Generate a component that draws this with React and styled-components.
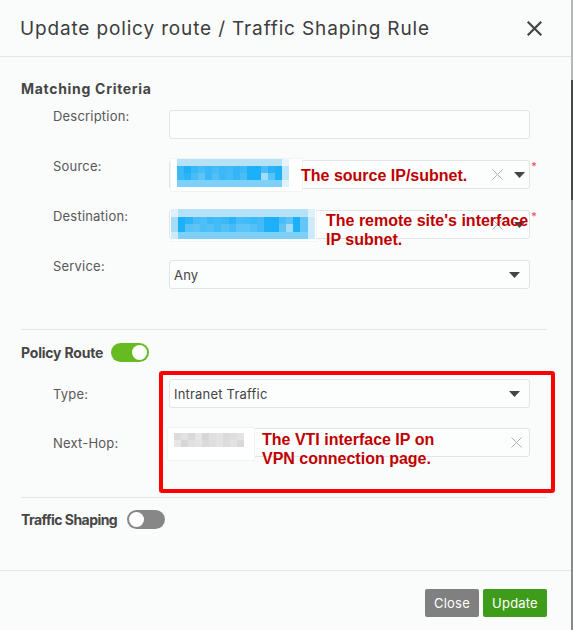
import React from "react";
import styled, { createGlobalStyle } from "styled-components";

const GlobalStyle = createGlobalStyle`
  html, body { margin: 0; padding: 0; }
  body {
    background: #fafbfb;
    font-family: Inter, "Noto Sans", "Liberation Sans", sans-serif;
    color: #444;
  }
`;

const Page = styled.div`
  display: flex;
  width: 573px;
  height: 630px;
  overflow: hidden;
`;

const Dialog = styled.div`
  width: 571px;
  display: flex;
  flex-direction: column;
  background: #fafbfb;
`;

const ScrollTrack = styled.div`
  width: 2px;
  display: flex;
  flex-direction: column;
  background: #8a8a8a;
`;

const ScrollTop = styled.div`
  height: 80px;
  background: #b8b8b8;
`;

const ScrollThumb = styled.div`
  height: 120px;
  background: #474747;
`;

const Header = styled.div`
  height: 56px;
  border-bottom: 1px solid #e3e5e6;
  display: flex;
  align-items: center;
  justify-content: space-between;
  padding: 0 29px 0 20px;
`;

const Title = styled.h1`
  margin: 0;
  font-size: 19px;
  font-weight: 400;
  color: #3d3d3d;
  letter-spacing: 0.85px;
`;

const CloseBtn = styled.button`
  border: 0;
  background: none;
  padding: 0;
  width: 16px;
  height: 16px;
  display: flex;
  align-items: center;
  justify-content: center;
  cursor: pointer;
`;

const Body = styled.div`
  flex: 1;
  padding: 0 24px 0 21px;
  display: flex;
  flex-direction: column;
`;

const SectionTitle = styled.div`
  display: flex;
  align-items: center;
  height: 20px;
  margin-top: ${(p) => p.$top}px;
  font-size: 14px;
  font-weight: 700;
  color: #464646;
`;

const TitleText = styled.span`
  width: ${(p) => (p.$w ? `${p.$w}px` : "auto")};
  white-space: nowrap;
  letter-spacing: ${(p) => p.$ls || 0}px;
`;

const Rows = styled.div`
  position: relative;
  display: flex;
  flex-direction: column;
  gap: ${(p) => p.$gap}px;
  margin-top: ${(p) => p.$top}px;
  padding-left: 32px;
`;

const Row = styled.div`
  position: relative;
  display: grid;
  grid-template-columns: 116px 361px;
  align-items: ${(p) => (p.$center ? "center" : "start")};
`;

const Label = styled.div`
  font-size: 13px;
  color: #585858;
  line-height: 12px;
  letter-spacing: 0.2px;
`;

const Field = styled.div`
  position: relative;
  height: 29px;
  box-sizing: border-box;
  border: 1px solid #e2e4e5;
  border-radius: 3px;
  background: #fcfdfd;
  display: flex;
  align-items: center;
  padding: 0 ${(p) => p.$pr ?? 9}px 0 4px;
  font-size: 13px;
  color: #444;
  letter-spacing: 0.2px;
`;

const FieldText = styled.span`
  flex: 1;
`;

const Icons = styled.span`
  display: flex;
  align-items: center;
  gap: 11px;
`;

const Required = styled.span`
  position: absolute;
  right: -8px;
  top: 0px;
  color: #f0445a;
  font-size: 11px;
  line-height: 10px;
`;

const Divider = styled.div`
  height: 1px;
  background: #e3e5e6;
  margin-top: ${(p) => p.$top}px;
`;

const Toggle = styled.div`
  width: 38px;
  height: 19px;
  border-radius: 10px;
  background: ${(p) => (p.$on ? "#66bb22" : "#878787")};
  display: flex;
  align-items: center;
  justify-content: ${(p) => (p.$on ? "flex-end" : "flex-start")};
  padding: 0 2px;
  box-sizing: border-box;
  flex-shrink: 0;
`;

const Knob = styled.div`
  width: 15px;
  height: 15px;
  border-radius: 50%;
  background: #fff;
`;

const Footer = styled.div`
  box-sizing: border-box;
  border-top: 1px solid #e3e5e6;
  height: 60px;
  display: flex;
  justify-content: flex-end;
  align-items: flex-start;
  gap: 4px;
  padding: 18px 24px 0 0;
`;

const Button = styled.button`
  height: 28px;
  width: ${(p) => p.$w}px;
  border: 0;
  border-radius: 2px;
  padding: 0;
  font-family: inherit;
  font-size: 13px;
  letter-spacing: 0.2px;
  color: #fff;
  background: ${(p) => p.$bg};
`;

const Paste = styled.div`
  position: absolute;
  left: ${(p) => p.$x}px;
  top: ${(p) => p.$y}px;
  width: ${(p) => p.$w}px;
  height: ${(p) => p.$h}px;
  background: #fff;
  border: 1px solid #f2f3f3;
  box-sizing: border-box;
`;

const Mosaic = styled.div`
  position: absolute;
  left: ${(p) => p.$x}px;
  top: ${(p) => p.$y}px;
  display: grid;
  grid-template-columns: repeat(${(p) => p.$cols}, ${(p) => p.$cw}px);
  grid-auto-rows: ${(p) => p.$rh}px;
`;

const Cell = styled.div`
  background: ${(p) => p.$c};
`;

const Note = styled.div`
  position: absolute;
  left: ${(p) => p.$x}px;
  top: ${(p) => p.$y}px;
  font-family: "Liberation Sans", Arial, sans-serif;
  font-weight: 700;
  font-size: 16px;
  line-height: 19px;
  color: #c00000;
  white-space: nowrap;
`;

const RedBox = styled.div`
  position: absolute;
  left: 138px;
  top: -8px;
  width: 396px;
  height: 122px;
  box-sizing: border-box;
  border: 4px solid #ff0000;
  border-radius: 3px;
  pointer-events: none;
`;

const Caret = () => (
  <svg width="11" height="6" viewBox="0 0 11 6">
    <path d="M0 0h11L5.5 6z" fill="#444" />
  </svg>
);

const Clear = () => (
  <svg width="11" height="11" viewBox="0 0 11 11">
    <path d="M0.5 0.5l10 10M10.5 0.5l-10 10" stroke="#b0b0b0" strokeWidth="1" />
  </svg>
);

const blueTop = "#b6e2f7";
const blueBot = "#7dd1f9";
const blueMid1 = ["#3bb8f6", "#1fb0f7", "#38b8f7", "#47bdf7", "#3ab8f6", "#44bcf6", "#3bb8f7", "#41baf7", "#33b5f7", "#3cb9f7", "#1cb0f8", "#1cb0f8", "#48bef7", "#2ab4f7", "#1eb1f7", "#c0e6f9"];
const blueMid2 = ["#3bb8f6", "#2ab3f7", "#47bdf7", "#5ec4f7", "#3ab8f6", "#52c0f7", "#3bb8f7", "#46bcf7", "#33b5f7", "#48bdf7", "#1cb0f8", "#1cb0f8", "#a4dcf8", "#56c2f7", "#1eb1f7", "#c0e6f9"];

const srcCells = [
  ...Array.from({ length: 16 }, (_, i) => (i === 15 ? "#e6f4fb" : blueTop)),
  ...blueMid1,
  ...blueMid2,
  ...Array.from({ length: 16 }, (_, i) => (i === 15 ? "#e0f2fb" : blueBot)),
];

const dstMid1 = ["#a6dcf7", "#1cb0f8", "#2bb4f8", "#48bdf7", "#4cbff7", "#3ab8f7", "#43bbf7", "#3bb8f6", "#2ab4f7", "#47bdf7", "#43bbf7", "#3ab8f7", "#45bcf7", "#1eb1f8", "#1cb0f8", "#48bef7", "#5cc4f7", "#1cb0f8", "#63c6f7", "#cfebf9"];
const dstMid2 = ["#a6dcf7", "#1cb0f8", "#57c2f7", "#5ec4f7", "#4cbff7", "#53c1f7", "#43bbf7", "#52c0f7", "#44bcf7", "#5ec4f7", "#5cc4f7", "#52c0f7", "#45bcf7", "#1eb1f8", "#1cb0f8", "#5ec4f7", "#a0dbf8", "#1cb0f8", "#63c6f7", "#cfebf9"];
const dstCells = [
  ...Array.from({ length: 20 }, (_, i) => (i === 0 || i === 19 ? "#dff1fa" : blueTop)),
  ...dstMid1,
  ...dstMid2,
  ...Array.from({ length: 20 }, (_, i) => (i === 0 || i === 19 ? "#cdeafa" : blueBot)),
];

const grays = ["#dcdcdc", "#e2e2e2", "#d9d9d9", "#e6e6e6", "#d6d6d6", "#e0e0e0", "#e4e4e4", "#dadada", "#dedede", "#e3e3e3"];
const hopCells = [...grays, ...grays.map((g, i) => grays[(i + 3) % 10])];

export default function App() {
  return (
    <>
      <GlobalStyle />
      <Page>
        <Dialog>
          <Header>
            <Title>Update policy route / Traffic Shaping Rule</Title>
            <CloseBtn aria-label="close">
              <svg width="15" height="15" viewBox="0 0 15 15">
                <path d="M1.5 1.5l12 12M13.5 1.5l-12 12" stroke="#444" strokeWidth="2.2" strokeLinecap="square" />
              </svg>
            </CloseBtn>
          </Header>
          <Body>
            <SectionTitle $top={21}>
              <TitleText $ls={0.7}>Matching Criteria</TitleText>
            </SectionTitle>
            <Rows $gap={21} $top={12}>
              <Row>
                <Label>Description:</Label>
                <Field />
              </Row>
              <Row>
                <Label>Source:</Label>
                <Field $pr={4}>
                  <FieldText />
                  <Icons>
                    <Clear />
                    <Caret />
                  </Icons>
                  <Required>*</Required>
                </Field>
                <Paste $x={117} $y={-2} $w={133} $h={34} />
                <Mosaic $x={124} $y={-1} $cols={16} $cw={7} $rh={7}>
                  {srcCells.map((c, i) => (
                    <Cell key={i} $c={c} />
                  ))}
                </Mosaic>
                <Note $x={248} $y={6}>The source IP/subnet.</Note>
              </Row>
              <Row>
                <Label>Destination:</Label>
                <Field $pr={4}>
                  <FieldText />
                  <Icons>
                    <Clear />
                    <Caret />
                  </Icons>
                  <Required>*</Required>
                </Field>
                <Paste $x={118} $y={0} $w={146} $h={32} />
                <Mosaic $x={118} $y={-1} $cols={20} $cw={7.2} $rh={7.5}>
                  {dstCells.map((c, i) => (
                    <Cell key={i} $c={c} />
                  ))}
                </Mosaic>
                <Note $x={273} $y={1}>
                  The remote site's interface
                  <br />
                  IP subnet.
                </Note>
              </Row>
              <Row>
                <Label>Service:</Label>
                <Field>
                  <FieldText>Any</FieldText>
                  <Caret />
                </Field>
              </Row>
            </Rows>
            <Divider $top={40} />
            <SectionTitle $top={12}>
              <TitleText $w={90} $ls={-0.2}>Policy Route</TitleText>
              <Toggle $on>
                <Knob />
              </Toggle>
            </SectionTitle>
            <Rows $gap={20} $top={17}>
              <RedBox />
              <Row $center>
                <Label>Type:</Label>
                <Field>
                  <FieldText>Intranet Traffic</FieldText>
                  <Caret />
                </Field>
              </Row>
              <Row $center>
                <Label>Next-Hop:</Label>
                <Field $pr={7}>
                  <FieldText />
                  <Clear />
                </Field>
                <Paste $x={114} $y={-1} $w={88} $h={34} />
                <Mosaic $x={121} $y={5} $cols={10} $cw={7} $rh={7}>
                  {hopCells.map((c, i) => (
                    <Cell key={i} $c={c} />
                  ))}
                </Mosaic>
                <Note $x={209} $y={2}>
                  The VTI interface IP on
                  <br />
                  VPN connection page.
                </Note>
              </Row>
            </Rows>
            <Divider $top={40} />
            <SectionTitle $top={11}>
              <TitleText $w={106} $ls={-0.55}>Traffic Shaping</TitleText>
              <Toggle>
                <Knob />
              </Toggle>
            </SectionTitle>
          </Body>
          <Footer>
            <Button $bg="#808080" $w={54}>Close</Button>
            <Button $bg="#3f9c1a" $w={64}>Update</Button>
          </Footer>
        </Dialog>
        <ScrollTrack>
          <ScrollTop />
          <ScrollThumb />
        </ScrollTrack>
      </Page>
    </>
  );
}
